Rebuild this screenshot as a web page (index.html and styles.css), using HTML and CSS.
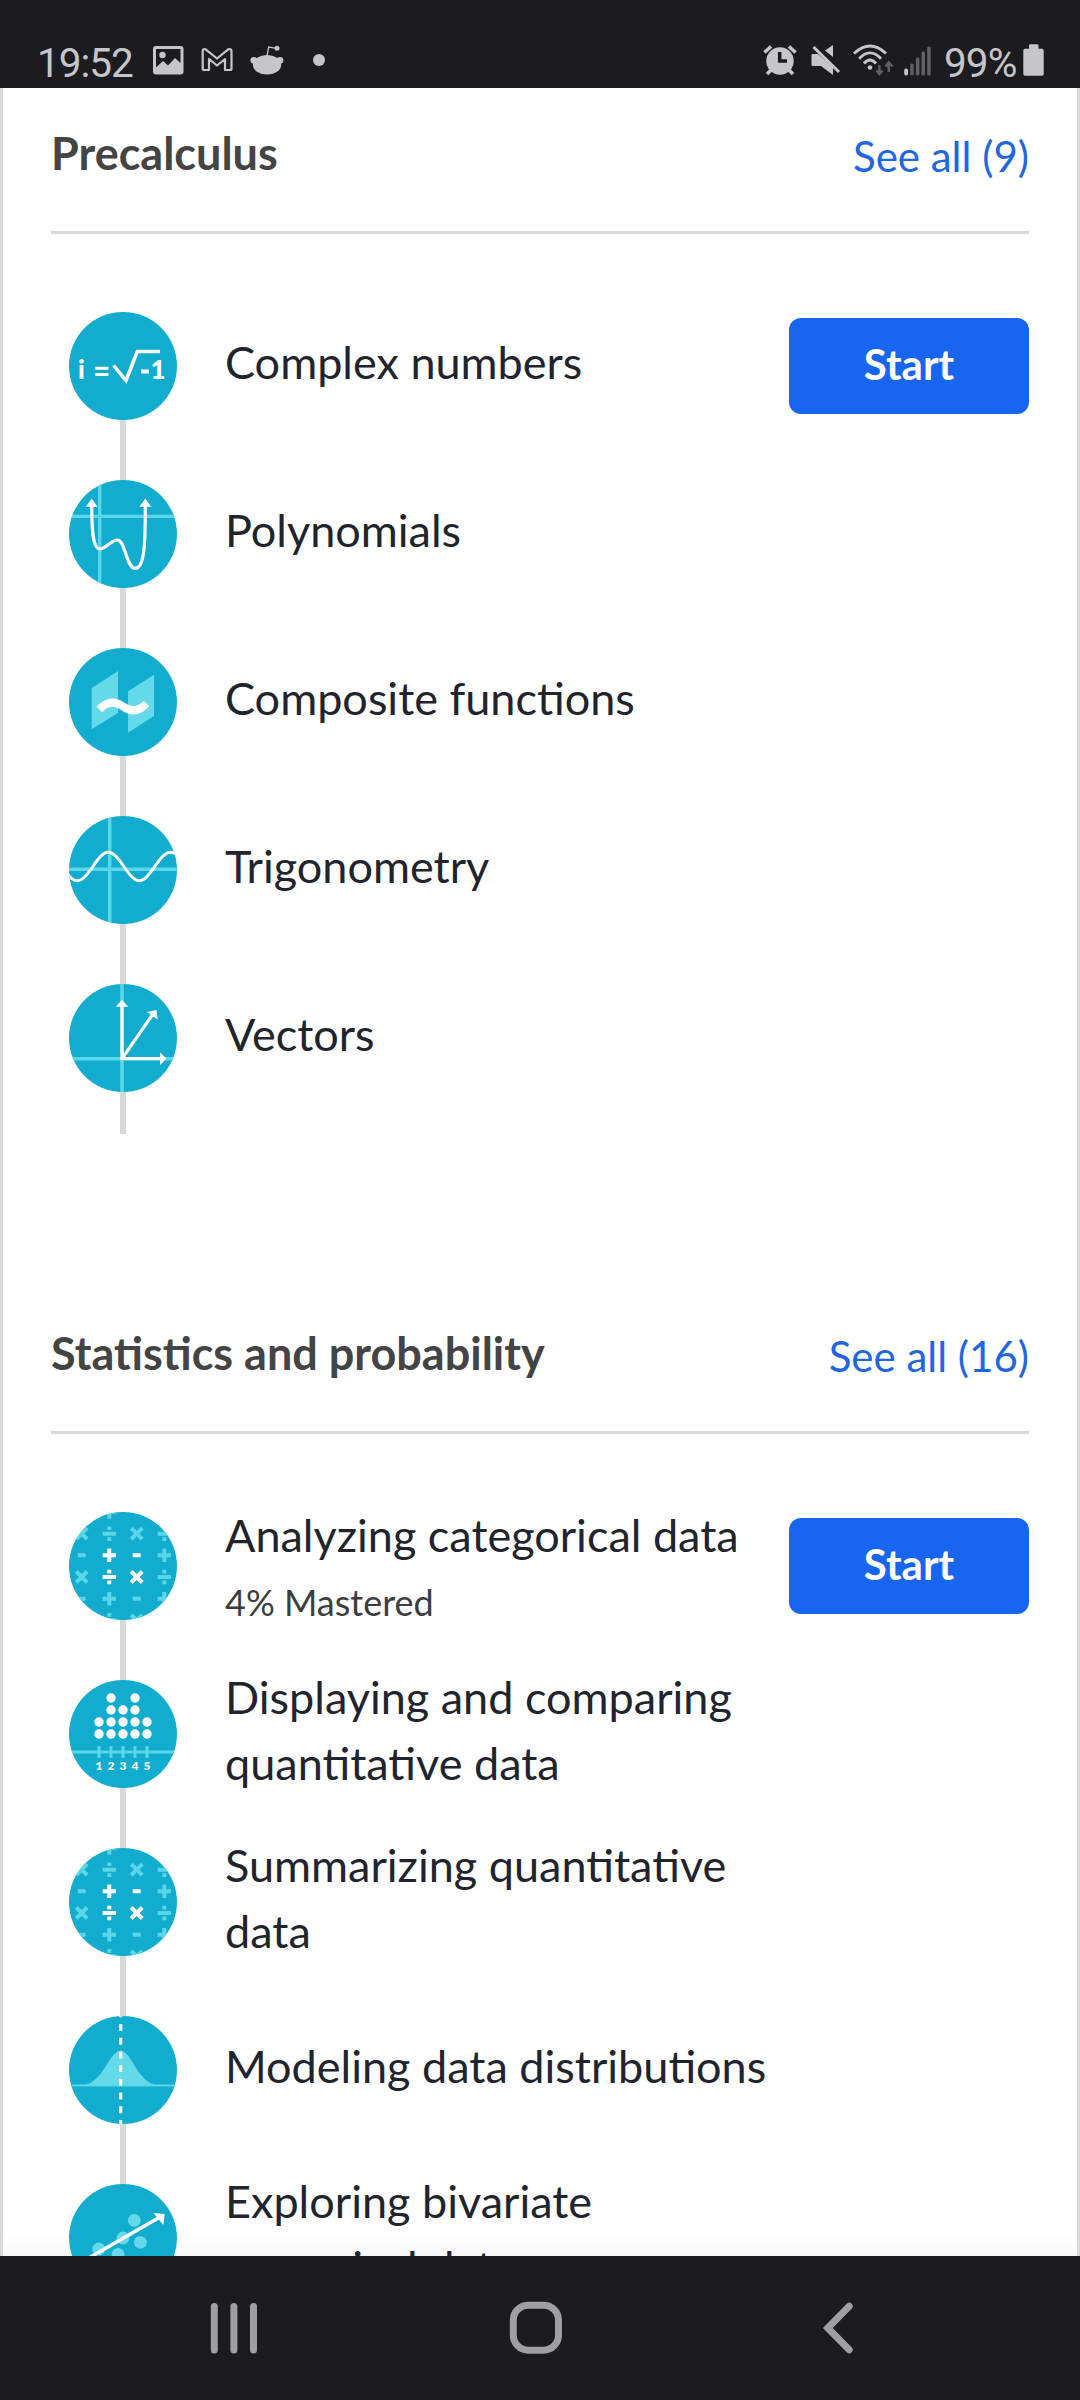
FILE: index.html
```html
<!DOCTYPE html>
<html lang="en">
<head>
<meta charset="utf-8">
<title>Courses</title>
<link rel="stylesheet" href="styles.css">
</head>
<body>
<svg class="defs" aria-hidden="true">
  <defs>
    <path id="plus" d="M-6.7 0H6.7M0-6.7V6.7"/>
    <path id="minus" d="M-4 0H4"/>
    <path id="times" d="M-5.500-5.500L5.500 5.500M5.500-5.500L-5.500 5.500"/>
    <path id="divide" d="M-6.7 0H6.7M0-7.2V-3.6M0 3.6V7.2"/>
    <g id="operators" stroke-width="4" fill="none">
      <g class="tint-line">
        <use href="#plus" x="40.3" y="0"/>
        <use href="#times" x="12.7" y="21.7"/><use href="#divide" x="40.3" y="21.7"/><use href="#times" x="67.7" y="21.7"/><use href="#divide" x="95.3" y="21.7"/>
        <use href="#minus" x="12.7" y="43.3"/><use href="#plus" x="95.3" y="43.3"/>
        <use href="#times" x="12.7" y="65"/><use href="#divide" x="95.3" y="65"/>
        <use href="#minus" x="12.7" y="86.7"/><use href="#plus" x="40.3" y="86.7"/><use href="#minus" x="67.7" y="86.7"/><use href="#plus" x="95.3" y="86.7"/>
        <use href="#divide" x="40.3" y="108.3"/><use href="#times" x="67.7" y="108.3"/>
      </g>
      <g class="white-line">
        <use href="#plus" x="40.3" y="43.3"/><use href="#minus" x="67.7" y="43.3"/>
        <use href="#divide" x="40.3" y="65"/><use href="#times" x="67.7" y="65"/>
      </g>
    </g>
  </defs>
</svg>

<header class="status">
  <div class="status-left">
    <span class="clock">19:52</span>
    <svg class="photo" width="31" height="40" viewBox="153 40 31 40"><path fill-rule="evenodd" d="M156 46H180.500Q183.500 46 183.500 49V71.500Q183.500 74.500 180.500 74.500H156Q153 74.500 153 71.500V49Q153 46 156 46ZM156 49V67.500L163 61L168 65.500L175 58L180.500 63V49Z"/><circle cx="162.500" cy="55" r="3.200"/></svg>
    <svg class="gmail" width="32" height="40" viewBox="201.500 40 32 40"><path class="outline" d="M203.200 51Q203.200 48.500 205.800 49.200L217.500 58.500L229 49.200Q232 48.500 232 51.500V68.500Q232 70 230.500 70H225.500V59L217.500 65.500L209.500 59V70H204.700Q203.200 70 203.200 68.500Z"/></svg>
    <svg class="reddit" width="34" height="40" viewBox="249.500 40 34 40"><ellipse cx="266.500" cy="64.700" rx="14.200" ry="9.800"/><circle cx="253.300" cy="60.300" r="3.400"/><circle cx="279.500" cy="60.300" r="3.400"/><circle cx="276.500" cy="48.300" r="2.500"/><path class="thin" d="M266.500 56L268.200 47L276 48.300"/></svg>
    <svg class="more" width="12" height="40" viewBox="313 40 12 40"><circle cx="319" cy="60" r="6"/></svg>
  </div>
  <div class="status-right">
    <svg class="alarm" width="34" height="40" viewBox="763 40 34 40"><circle cx="780" cy="61" r="13.700"/><path class="legs" d="M764.500 52.500L771 46.500M795.500 52.500L789 46.500M767 74L772 69M793 74L788 69"/><path class="cut" d="M779.700 52V61H787"/></svg>
    <svg class="mute" width="30" height="40" viewBox="811 40 30 40"><path d="M812.500 54H818L833 67V75L821 66H812.500Q811.500 66 811.500 65V55Q811.500 54 812.500 54ZM833 45V57L825 50.500Z"/><path class="slash" d="M813.500 47L839 72"/></svg>
    <svg class="wifi" width="41" height="40" viewBox="853 40 41 40"><path class="arc" d="M854 53.500Q870 38.500 886 53.500M859.200 58.700Q870 47 881 58.700M864 63.500Q870 56.500 876 63.500"/><circle cx="870" cy="67.500" r="2.300"/><path class="traffic" d="M879.400 65V73.500M876.500 70.500L879.400 74L882.500 70.500M888.700 72V63M885.500 66.500L888.700 62.500L892.500 66.500"/></svg>
    <svg class="signal" width="27" height="40" viewBox="904 40 27 40"><rect x="904.200" y="68.500" width="3.800" height="7" rx="1.800"/><g class="dim"><rect x="910.200" y="63.500" width="3.500" height="12" rx="1.500"/><rect x="915.900" y="57.500" width="3.500" height="18" rx="1.500"/><rect x="921.500" y="51.500" width="3.500" height="24" rx="1.500"/><rect x="927.200" y="46.500" width="3.500" height="29" rx="1.500"/></g></svg>
    <span class="percent">99%</span>
    <svg class="battery" width="21" height="40" viewBox="1022.500 40 21 40"><path d="M1028.500 48.700V45.500Q1028.500 44.300 1029.700 44.300H1036.800Q1038 44.300 1038 45.500V48.700H1041.500Q1043.200 48.700 1043.200 50.500V74Q1043.200 75.800 1041.500 75.800H1024.500Q1022.800 75.800 1022.800 74V50.500Q1022.800 48.700 1024.500 48.700Z"/></svg>
  </div>
</header>

<main class="page">
  <section class="course">
    <div class="course-head"><h2>Precalculus</h2><a class="see-all">See all (9)</a></div>
    <ul class="units">
      <li class="unit">
        <svg class="icon" viewBox="0 0 108 108">
          <text class="formula" x="9" y="66.700">i</text><text class="formula" x="81.500" y="66.700">1</text>
          <path class="white-line" stroke-width="3" d="M26.300 56.300H39.500M26.300 62.500H39.500"/>
          <path class="white-line" stroke-width="3.500" d="M44.600 53.500L57 68.500L68.300 39.500H91"/>
          <path class="white-line" stroke-width="4" d="M72 59.500H80"/>
        </svg>
        <div class="label">Complex numbers</div>
        <button class="start">Start</button>
      </li>
      <li class="unit">
        <svg class="icon" viewBox="0 0 108 108">
          <path class="tint-line" stroke-width="3.300" d="M30.700 0V108M0 36.300H108"/>
          <path class="white-line" stroke-width="3.200" d="M22.700 25C22.700 52 24 69 31 69C37 69 42 60 48.300 60C56.500 60 57 88.300 66.300 88.300C76 88.300 76.300 60 76.300 25"/>
          <path class="white" d="M16.700 27L22.700 18.500L28.700 27ZM70.300 27L76.300 18.500L82.300 27Z"/>
        </svg>
        <div class="label">Polynomials</div>
      </li>
      <li class="unit">
        <svg class="icon" viewBox="0 0 108 108">
          <path class="tint" d="M22.700 40L49 23V65L22.700 81.300ZM59 43.300L85 26.700V68L59 84.700Z"/>
          <path class="white-line" stroke-width="8" d="M30.300 61.500Q42 49.500 54 58.500Q66 67.500 77.500 55.500"/>
        </svg>
        <div class="label">Composite functions</div>
      </li>
      <li class="unit">
        <svg class="icon" viewBox="0 0 108 108">
          <path class="tint-line" stroke-width="3.500" d="M40.700 0V108M0 53.300H108"/>
          <path class="white-line" stroke-width="3" d="M-4 54C0 61 4 64.700 8.300 64.700C19.500 64.700 28 36.300 39.300 36.300C50.500 36.300 59 64.700 70.200 64.700C81.500 64.700 90 36.300 101.700 36.300Q106 36.300 109 40"/>
        </svg>
        <div class="label">Trigonometry</div>
      </li>
      <li class="unit">
        <svg class="icon" viewBox="0 0 108 108">
          <path class="tint-line" stroke-width="3.500" d="M53 0V108M0 74.700H108"/>
          <path class="white-line" stroke-width="3.200" d="M53 20V74.700H93M53 74.700L84 30"/>
          <path class="white" d="M46.700 22.700L53 15.700L59.300 22.700ZM91 68.300L97.500 74.700L91 81ZM77.700 28L87.500 26L88.700 35.500Z"/>
        </svg>
        <div class="label">Vectors</div>
      </li>
    </ul>
  </section>

  <section class="course">
    <div class="course-head"><h2>Statistics and probability</h2><a class="see-all">See all (16)</a></div>
    <ul class="units">
      <li class="unit">
        <svg class="icon" viewBox="0 0 108 108"><use href="#operators"/></svg>
        <div class="label with-progress">Analyzing categorical data<div class="progress">4% Mastered</div></div>
        <button class="start">Start</button>
      </li>
      <li class="unit">
        <svg class="icon" viewBox="0 0 108 108">
          <g class="white">
            <circle cx="42" cy="18" r="4.700"/><circle cx="66" cy="18" r="4.700"/>
            <circle cx="42" cy="30" r="4.700"/><circle cx="54" cy="30" r="4.700"/><circle cx="66" cy="30" r="4.700"/>
            <circle cx="30" cy="42" r="4.700"/><circle cx="42" cy="42" r="4.700"/><circle cx="54" cy="42" r="4.700"/><circle cx="66" cy="42" r="4.700"/><circle cx="78" cy="42" r="4.700"/>
            <circle cx="30" cy="54" r="4.700"/><circle cx="42" cy="54" r="4.700"/><circle cx="54" cy="54" r="4.700"/><circle cx="66" cy="54" r="4.700"/><circle cx="78" cy="54" r="4.700"/>
          </g>
          <path class="tint-line" stroke-width="3" d="M0 72H108M30 66V78M42 66V78M54 66V78M66 66V78M78 66V78"/>
          <g class="tick"><text x="30" y="89.700">1</text><text x="42" y="89.700">2</text><text x="54" y="89.700">3</text><text x="66" y="89.700">4</text><text x="78" y="89.700">5</text></g>
        </svg>
        <div class="label">Displaying and comparing quantitative data</div>
      </li>
      <li class="unit">
        <svg class="icon" viewBox="0 0 108 108"><use href="#operators"/></svg>
        <div class="label">Summarizing quantitative data</div>
      </li>
      <li class="unit">
        <svg class="icon" viewBox="0 0 108 108">
          <path class="tint" d="M13 69.500C34 68 40 34.700 51.700 34.700C63 34.700 68 68 90 69.500Z"/>
          <path class="tint-line" stroke-width="2" d="M0 69.500H108"/>
          <path class="white-line" stroke-width="3.200" stroke-dasharray="7 6.700" d="M51.700-5.700V108"/>
        </svg>
        <div class="label">Modeling data distributions</div>
      </li>
      <li class="unit">
        <svg class="icon" viewBox="0 0 108 108">
          <g class="tint"><circle cx="65.300" cy="36.300" r="6.400"/><circle cx="54" cy="54" r="6.400"/><circle cx="71.400" cy="58.300" r="6.400"/><circle cx="29.800" cy="65" r="6.400"/><circle cx="49" cy="70.300" r="6.400"/></g>
          <path class="white-line" stroke-width="3.600" d="M12 78.500L91 33"/>
          <path class="white" d="M84.500 29L95.700 30L94.300 41Z"/>
        </svg>
        <div class="label">Exploring bivariate numerical data</div>
      </li>
    </ul>
  </section>
</main>

<nav class="navbar">
  <svg class="recents" width="50" height="60" viewBox="209 2298 50 60"><path d="M214.300 2306.500V2350M233.900 2306.500V2350M253.500 2306.500V2350"/></svg>
  <svg class="home" width="60" height="60" viewBox="506 2298 60 60"><rect x="513.300" y="2305.200" width="45.200" height="45" rx="15"/></svg>
  <svg class="back" width="34" height="60" viewBox="822 2298 34 60"><path d="M849.200 2306.300L827.800 2328L849.200 2349.700"/></svg>
</nav>
</body>
</html>
```
FILE: styles.css
```css
* { box-sizing: border-box; }

body {
  margin: 0;
  width: 1080px;
  height: 2400px;
  overflow: hidden;
  display: flex;
  flex-direction: column;
  background: #fff;
  font-family: Lato, sans-serif;
  color: #21242c;
}

svg { display: block; flex: none; }
.defs { position: absolute; width: 0; height: 0; }

/* Status bar */
.status {
  flex: none;
  height: 88px;
  padding: 40px 36px 0 37px;
  display: flex;
  justify-content: space-between;
  background: #1c1b20;
  color: #c6c5c8;
  fill: #c6c5c8;
  font: 40.500px/46px Roboto, sans-serif;
}
.status-left, .status-right { display: flex; }
.clock { width: 116px; letter-spacing: -1px; }
.gmail { margin-left: 17px; }
.reddit { margin-left: 16.500px; }
.more { margin-left: 29.500px; }
.mute { margin-left: 14px; }
.wifi { margin-left: 12px; }
.signal { margin-left: 10px; }
.percent { width: 92px; padding-left: 13px; letter-spacing: -0.900px; }
.outline { fill: none; stroke: #c6c5c8; stroke-width: 2.200; stroke-linejoin: round; }
.thin { fill: none; stroke: #c6c5c8; stroke-width: 1.300; }
.legs { fill: none; stroke: #c6c5c8; stroke-width: 3.500; }
.cut { fill: none; stroke: #1c1b20; stroke-width: 3.500; }
.slash { fill: none; stroke: #c6c5c8; stroke-width: 3; }
.arc { fill: none; stroke: #c6c5c8; stroke-width: 2.900; }
.traffic { fill: none; stroke: #616065; stroke-width: 2.500; }
.dim { fill: #616065; }

/* Course list */
.page {
  flex: 1;
  min-height: 0;
  overflow: hidden;
  padding: 0 48px;
  border: solid #d8d9da;
  border-width: 0 3px;
  background: linear-gradient(to top, #f7f7f7, #fff 20px);
}
.course { height: 1200px; }
.course-head {
  height: 146px;
  border-bottom: 3px solid #d6d8da;
  display: flex;
  justify-content: space-between;
}
h2 {
  margin: 0;
  padding-top: 35px;
  font-size: 45px;
  line-height: 60px;
  font-weight: 700;
  color: #444;
}
.see-all {
  padding-top: 38px;
  font-size: 42px;
  line-height: 60px;
  color: #1f66e0;
}

.units {
  list-style: none;
  margin: 48px 0 0;
  padding: 0 0 0 18px;
}
.unit {
  height: 168px;
  display: flex;
  align-items: center;
  background: linear-gradient(#d6d8da, #d6d8da) 51px 0 / 6px 100% no-repeat;
}
.unit:first-child { background-position: 51px 100%; background-size: 6px 50%; }
.unit:last-child { height: 180px; padding-bottom: 12px; }
.icon {
  width: 108px;
  height: 108px;
  border-radius: 50%;
  background: #12acce;
}
.white { fill: #fff; }
.tint { fill: #63d9ea; }
.white-line { fill: none; stroke: #fff; }
.tint-line { fill: none; stroke: #5bd5e8; }
.formula { fill: #fff; font-size: 26px; font-weight: 900; }
.tick { fill: #fff; font-size: 12px; font-weight: 900; text-anchor: middle; }

.label {
  width: 552px;
  margin-left: 48px;
  padding-bottom: 8px;
  font-size: 45px;
  line-height: 66px;
  flex: none;
}
.with-progress { padding: 6px 0 0; }
.progress {
  font-size: 36px;
  line-height: 68px;
  color: #3b3e40;
}
.start {
  width: 240px;
  height: 96px;
  margin-left: 12px;
  padding: 0 0 5px;
  border: 0;
  border-radius: 12px;
  background: #1865f2;
  color: #fff;
  font: 700 42px/60px Lato, sans-serif;
}

/* Navigation bar */
.navbar {
  flex: none;
  height: 144px;
  padding: 42px 0 0 209px;
  display: flex;
  background: #1c1b20;
  fill: none;
  stroke: #9f9ea0;
  stroke-width: 7;
  stroke-linecap: round;
}
.home { margin-left: 247px; }
.back { margin-left: 256px; }
```
